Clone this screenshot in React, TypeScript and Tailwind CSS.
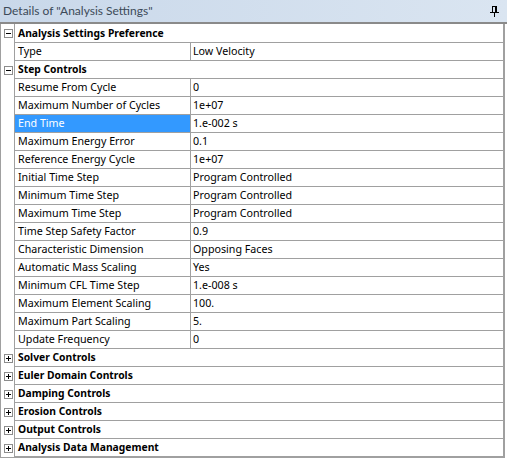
import React from "react";

type Row =
  | { kind: "group"; label: string; open: boolean }
  | { kind: "prop"; label: string; value: string; selected?: boolean };

const rows: Row[] = [
  { kind: "group", label: "Analysis Settings Preference", open: true },
  { kind: "prop", label: "Type", value: "Low Velocity" },
  { kind: "group", label: "Step Controls", open: true },
  { kind: "prop", label: "Resume From Cycle", value: "0" },
  { kind: "prop", label: "Maximum Number of Cycles", value: "1e+07" },
  { kind: "prop", label: "End Time", value: "1.e-002 s", selected: true },
  { kind: "prop", label: "Maximum Energy Error", value: "0.1" },
  { kind: "prop", label: "Reference Energy Cycle", value: "1e+07" },
  { kind: "prop", label: "Initial Time Step", value: "Program Controlled" },
  { kind: "prop", label: "Minimum Time Step", value: "Program Controlled" },
  { kind: "prop", label: "Maximum Time Step", value: "Program Controlled" },
  { kind: "prop", label: "Time Step Safety Factor", value: "0.9" },
  { kind: "prop", label: "Characteristic Dimension", value: "Opposing Faces" },
  { kind: "prop", label: "Automatic Mass Scaling", value: "Yes" },
  { kind: "prop", label: "Minimum CFL Time Step", value: "1.e-008 s" },
  { kind: "prop", label: "Maximum Element Scaling", value: "100." },
  { kind: "prop", label: "Maximum Part Scaling", value: "5." },
  { kind: "prop", label: "Update Frequency", value: "0" },
  { kind: "group", label: "Solver Controls", open: false },
  { kind: "group", label: "Euler Domain Controls", open: false },
  { kind: "group", label: "Damping Controls", open: false },
  { kind: "group", label: "Erosion Controls", open: false },
  { kind: "group", label: "Output Controls", open: false },
  { kind: "group", label: "Analysis Data Management", open: false },
];

function ToggleBox({ open }: { open: boolean }) {
  return (
    <svg width="9" height="9" viewBox="0 0 9 9" className="block">
      <rect x="0.5" y="0.5" width="8" height="8" fill="#fff" stroke="#8c8c8c" />
      <line x1="2" y1="4.5" x2="7" y2="4.5" stroke="#000" />
      {!open && <line x1="4.5" y1="2" x2="4.5" y2="7" stroke="#000" />}
    </svg>
  );
}

function PinIcon() {
  return (
    <svg width="9" height="11" viewBox="0 0 9 11" className="block">
      <rect x="2" y="0" width="1" height="6" fill="#000" />
      <rect x="2" y="0" width="5" height="1" fill="#000" />
      <rect x="5" y="0" width="1" height="6" fill="#000" />
      <rect x="6" y="0" width="1" height="6" fill="#000" />
      <rect x="0" y="6" width="9" height="1" fill="#000" />
      <rect x="4" y="7" width="1" height="4" fill="#000" />
    </svg>
  );
}

export default function App() {
  return (
    <div
      className="w-[507px] h-[460px] bg-white overflow-hidden"
      style={{ fontFamily: '"Noto Sans", "Open Sans", sans-serif' }}
    >
      <div className="h-[24px] border-b-2 border-[#8a8a8a] bg-gradient-to-r from-[#c9d8ea] to-[#dae5f1] flex items-center justify-between pl-[3px] pr-[8px]">
        <span
          className="text-[12px] text-[#3c4a58] leading-none"
          style={{ fontFamily: 'Lato, "Noto Sans", sans-serif' }}
        >
          Details of "Analysis Settings"
        </span>
        <PinIcon />
      </div>
      <div className="w-[505px] border-l border-r-2 border-l-[#a0a0a0] border-r-[#a0a0a0] border-b border-b-[#a0a0a0]">
        {rows.map((r, i) => (
          <div
            key={i}
            className={`flex ${i === 0 ? "h-[19px]" : "h-[18px]"} text-[10.7px] leading-none text-black`}
          >
            <div className="w-[14px] shrink-0 flex items-center justify-center border-r border-[#a0a0a0] pl-[1px]">
              {r.kind === "group" && <ToggleBox open={r.open} />}
            </div>
            {r.kind === "group" ? (
              <div className="flex-1 flex items-center pl-[3px] font-bold text-[10.3px] border-b border-[#a0a0a0]">
                {r.label}
              </div>
            ) : (
              <>
                <div
                  className={`w-[176px] shrink-0 flex items-center pl-[3px] border-b border-r border-[#a0a0a0] ${
                    r.selected ? "bg-[#3399ff] text-white" : ""
                  }`}
                >
                  {r.label}
                </div>
                <div className="flex-1 flex items-center pl-[2px] border-b border-[#a0a0a0]">
                  {r.value}
                </div>
              </>
            )}
          </div>
        ))}
      </div>
    </div>
  );
}
